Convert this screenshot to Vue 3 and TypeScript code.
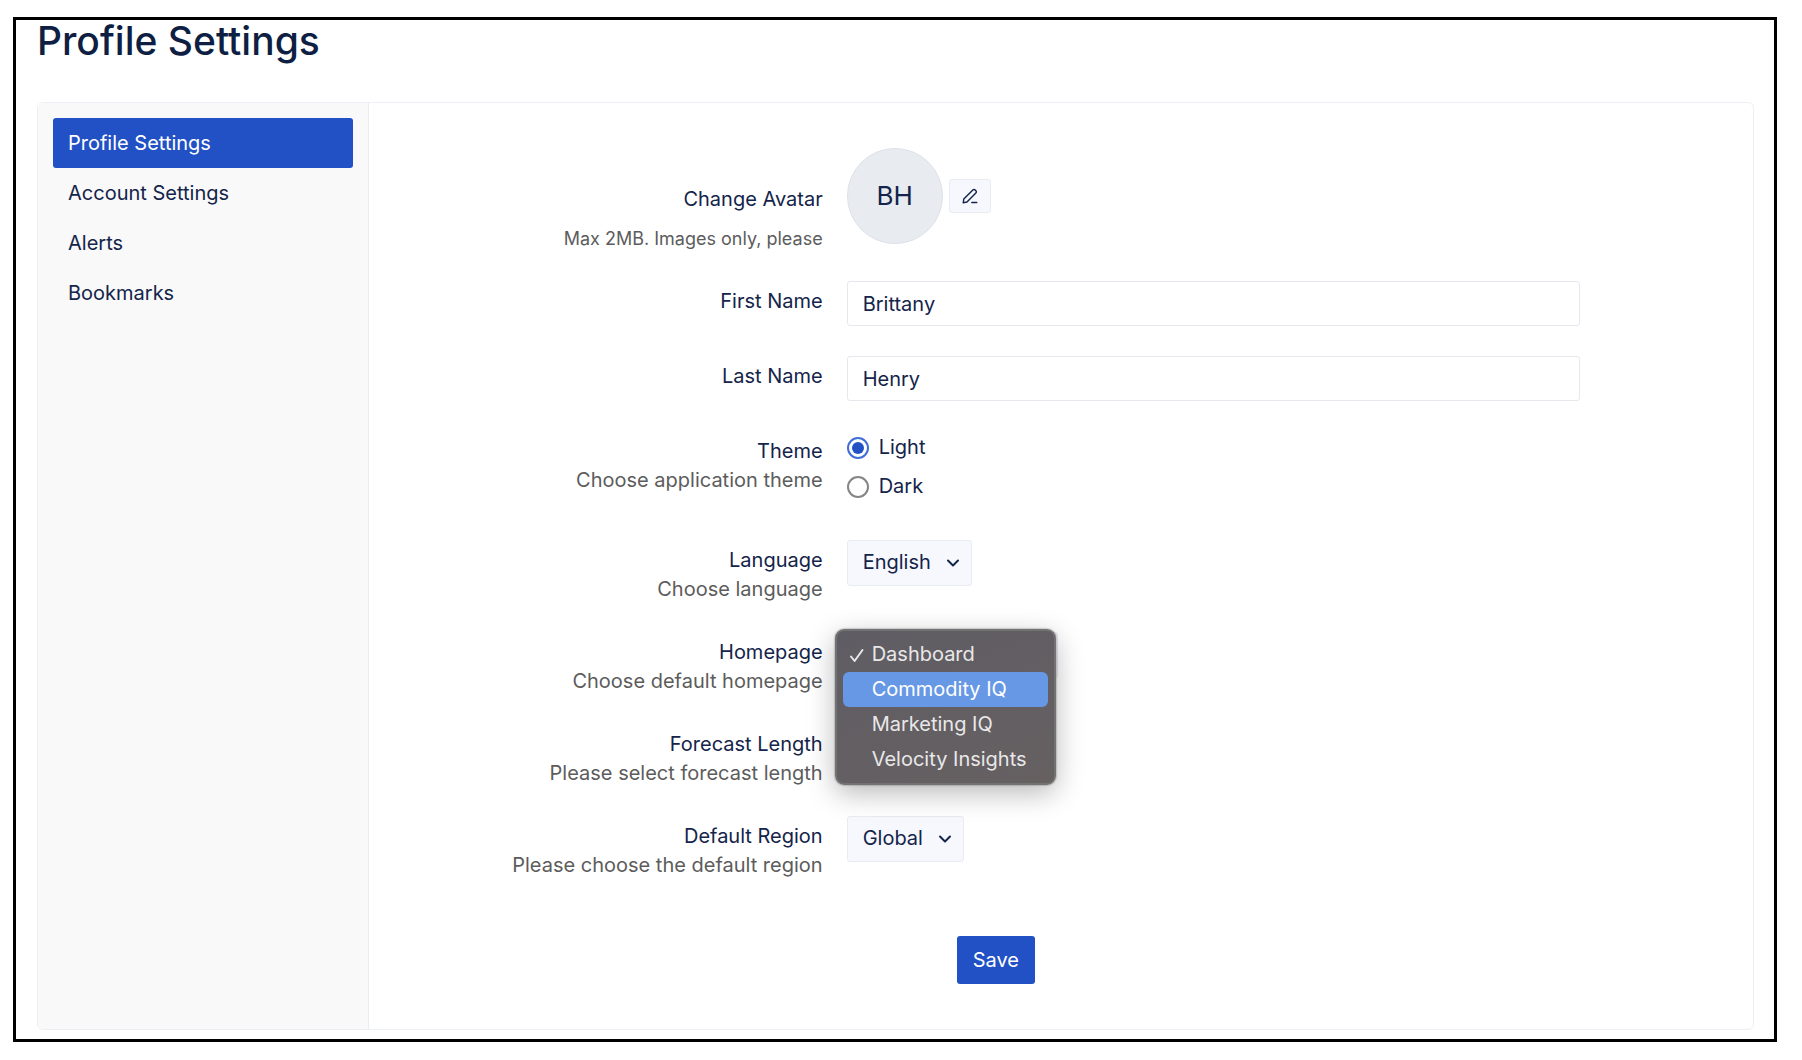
<script setup lang="ts">
import { ref } from 'vue'

interface NavItem {
  id: string
  label: string
}

const navItems: NavItem[] = [
  { id: 'profile', label: 'Profile Settings' },
  { id: 'account', label: 'Account Settings' },
  { id: 'alerts', label: 'Alerts' },
  { id: 'bookmarks', label: 'Bookmarks' },
]
const homepages: string[] = ['Dashboard', 'Commodity IQ', 'Marketing IQ', 'Velocity Insights']

const activeNav = ref<string>('profile')
const firstName = ref<string>('Brittany')
const lastName = ref<string>('Henry')
const theme = ref<'light' | 'dark'>('light')
const language = ref<string>('English')
const region = ref<string>('Global')
const homepage = ref<string>('Dashboard')
const highlighted = ref<string>('Commodity IQ')
const menuOpen = ref<boolean>(true)

function chooseHomepage(name: string): void {
  homepage.value = name
  menuOpen.value = false
}
</script>

<template>
  <div class="page">
    <main class="frame">
      <h1 class="title">Profile Settings</h1>
      <div class="card">
        <nav class="sidebar">
          <a
            v-for="item in navItems"
            :key="item.id"
            :href="'#' + item.id"
            class="nav-link"
            :class="{ active: item.id === activeNav }"
            @click.prevent="activeNav = item.id"
          >{{ item.label }}</a>
        </nav>

        <form class="form" @submit.prevent>
          <div class="row avatar-row">
            <div class="label">
              <div>Change Avatar</div>
              <div class="hint small">Max 2MB. Images only, please</div>
            </div>
            <div class="avatar-control">
              <div class="avatar">BH</div>
              <button type="button" class="edit" aria-label="Edit avatar">
                <svg width="16" height="16" viewBox="0 0 18 18" fill="none" stroke="currentColor" stroke-width="1.6" stroke-linejoin="round" stroke-linecap="round">
                  <path d="M1.4 16.6 2 12.4 12.2 2.2a1.8 1.8 0 0 1 2.6 0l.8.8a1.8 1.8 0 0 1 0 2.6L5.6 15.8Z" />
                  <path d="M11 16.4H16.6" />
                </svg>
              </button>
            </div>
          </div>

          <div class="row input-row">
            <label class="label" for="first-name">First Name</label>
            <input id="first-name" v-model="firstName" class="text-input" type="text">
          </div>

          <div class="row input-row">
            <label class="label" for="last-name">Last Name</label>
            <input id="last-name" v-model="lastName" class="text-input" type="text">
          </div>

          <div class="row theme-row">
            <div class="label">
              <div id="theme-label">Theme</div>
              <div class="hint">Choose application theme</div>
            </div>
            <div class="radios" role="radiogroup" aria-labelledby="theme-label">
              <label class="radio"><input v-model="theme" type="radio" name="theme" value="light">Light</label>
              <label class="radio"><input v-model="theme" type="radio" name="theme" value="dark">Dark</label>
            </div>
          </div>

          <div class="row">
            <div class="label">
              <label for="language">Language</label>
              <div class="hint">Choose language</div>
            </div>
            <div class="control">
              <div class="select">
                <select id="language" v-model="language">
                  <option>English</option>
                </select>
                <svg class="chevron" width="14" height="10" viewBox="0 0 14 10"><path d="M2 2.5 7 7.5 12 2.5" /></svg>
              </div>
            </div>
          </div>

          <div class="row">
            <div class="label">
              <label for="homepage">Homepage</label>
              <div class="hint">Choose default homepage</div>
            </div>
            <div class="control">
              <div class="select">
                <select id="homepage" v-model="homepage">
                  <option v-for="name in homepages" :key="name">{{ name }}</option>
                </select>
                <svg class="chevron" width="14" height="10" viewBox="0 0 14 10"><path d="M2 2.5 7 7.5 12 2.5" /></svg>
              </div>
              <ul v-if="menuOpen" class="menu" role="listbox" aria-label="Homepage">
                <li
                  v-for="name in homepages"
                  :key="name"
                  class="menu-item"
                  role="option"
                  :aria-selected="name === homepage"
                  :class="{ highlighted: name === highlighted }"
                  @mouseenter="highlighted = name"
                  @click="chooseHomepage(name)"
                >
                  <span class="mark">
                    <svg v-if="name === homepage" width="16" height="16" viewBox="0 0 16 16"><path d="M2 9.5 5.6 14 13.5 3" /></svg>
                  </span>
                  {{ name }}
                </li>
              </ul>
            </div>
          </div>

          <div class="row">
            <div class="label">
              <label for="forecast">Forecast Length</label>
              <div class="hint">Please select forecast length</div>
            </div>
            <div class="control">
              <div class="select">
                <select id="forecast"></select>
              </div>
            </div>
          </div>

          <div class="row">
            <div class="label">
              <label for="region">Default Region</label>
              <div class="hint">Please choose the default region</div>
            </div>
            <div class="control">
              <div class="select">
                <select id="region" v-model="region">
                  <option>Global</option>
                </select>
                <svg class="chevron" width="14" height="10" viewBox="0 0 14 10"><path d="M2 2.5 7 7.5 12 2.5" /></svg>
              </div>
            </div>
          </div>

          <div class="row actions">
            <button type="submit" class="save">Save</button>
          </div>
        </form>
      </div>
    </main>
  </div>
</template>

<style>
body {
  background: #fff;
}
</style>

<style scoped>
.page,
.page * {
  box-sizing: border-box;
}
.page {
  padding: 17px 25px 19px 13px;
  color: #14244a;
  font-family: Inter, "Liberation Sans", sans-serif;
  font-size: 20px;
  line-height: 29px;
}
.frame {
  border: 3px solid #000;
  padding: 0 20px 9px 21px;
}
.title {
  margin: 0 0 40px;
  color: #0f1f43;
  font-size: 39px;
  line-height: 42px;
  font-weight: 500;
}
.card {
  display: flex;
  border: 1px solid #eceff4;
  border-radius: 6px;
}
.sidebar {
  flex: 0 0 331px;
  display: flex;
  flex-direction: column;
  padding: 15px;
  background: #f9f9f9;
  border-right: 1px solid #e9eef4;
}
.nav-link {
  padding: 0 15px;
  border-radius: 3px;
  color: inherit;
  line-height: 50px;
  text-decoration: none;
}
.nav-link.active {
  background: #2151c5;
  color: #fff;
}
.form {
  flex: 1;
  min-width: 0;
  display: flex;
  flex-direction: column;
  gap: 28px;
  padding: 45px 173px 45px 87px;
}
.row {
  display: grid;
  grid-template-columns: 1fr 2fr;
  column-gap: 24px;
  align-items: start;
  min-height: 64px;
}
.avatar-row {
  min-height: 105px;
}
.input-row {
  min-height: 47px;
}
.theme-row {
  min-height: 81px;
}
.label {
  padding-top: 6px;
  text-align: right;
  white-space: nowrap;
}
.avatar-row .label {
  padding-top: 37px;
}
.label > label {
  display: block;
}
.hint {
  color: #5c5c5c;
}
.hint.small {
  margin-top: 10px;
  font-size: 18px;
}
.avatar-control {
  display: flex;
  align-items: center;
  gap: 6px;
}
.avatar {
  width: 96px;
  height: 96px;
  border: 1px solid #dde1e8;
  border-radius: 50%;
  background: #e8ebf0;
  font-size: 26px;
  line-height: 94px;
  text-align: center;
}
.edit {
  display: flex;
  align-items: center;
  justify-content: center;
  width: 42px;
  height: 34px;
  padding: 0;
  border: 1px solid #e8ebf2;
  border-radius: 3px;
  background: #f6f8fe;
  color: inherit;
}
.text-input {
  width: 100%;
  height: 45px;
  padding: 0 15px;
  border: 1px solid #e6e8ee;
  border-radius: 3px;
  background: #fff;
  color: inherit;
  font: inherit;
}
.radios {
  display: flex;
  flex-direction: column;
  gap: 7px;
}
.radio {
  display: flex;
  align-items: center;
  gap: 10px;
  height: 32px;
}
.radio input {
  appearance: none;
  display: grid;
  place-items: center;
  width: 22px;
  height: 22px;
  margin: 2px 0 0;
  border: 2px solid #858585;
  border-radius: 50%;
  background: #fff;
}
.radio input:checked {
  border-color: #3f6fd6;
}
.radio input:checked::before {
  content: "";
  width: 12px;
  height: 12px;
  border-radius: 50%;
  background: #2151c5;
}
.control {
  position: relative;
}
.select {
  display: inline-grid;
  align-items: center;
  vertical-align: top;
}
.select select {
  grid-area: 1 / 1;
  appearance: none;
  height: 46px;
  padding: 0 39px 2px 15px;
  border: 1px solid #e8ebf2;
  border-radius: 3px;
  background: #f6f8fe;
  color: inherit;
  font: inherit;
}
.chevron {
  grid-area: 1 / 1;
  justify-self: end;
  margin-right: 12px;
  fill: none;
  stroke: #14244a;
  stroke-width: 2;
  stroke-linecap: round;
  stroke-linejoin: round;
  pointer-events: none;
}
.menu {
  position: absolute;
  z-index: 2;
  top: -3px;
  left: -12px;
  width: 221px;
  margin: 0;
  padding: 6px;
  border: 2px solid #727272;
  border-radius: 9px;
  background: linear-gradient(160deg, #5f5d64, #666061);
  box-shadow: 0 8px 28px rgba(0, 0, 0, 0.28), 0 0 2px rgba(0, 0, 0, 0.5);
  list-style: none;
}
.menu-item {
  display: flex;
  align-items: center;
  height: 35px;
  padding-left: 6px;
  border-radius: 6px;
  color: #e9e8e9;
  white-space: nowrap;
}
.menu-item.highlighted {
  background: #6798e6;
  color: #fff;
}
.mark {
  display: flex;
  width: 23px;
}
.mark path {
  fill: none;
  stroke: currentColor;
  stroke-width: 2;
  stroke-linecap: round;
  stroke-linejoin: round;
}
.actions {
  padding-top: 28px;
}
.save {
  grid-column: 2;
  justify-self: start;
  height: 48px;
  margin-left: 15%;
  padding: 0 16px;
  border: 0;
  border-radius: 3px;
  background: #2151c5;
  color: #fff;
  font: inherit;
}
</style>
